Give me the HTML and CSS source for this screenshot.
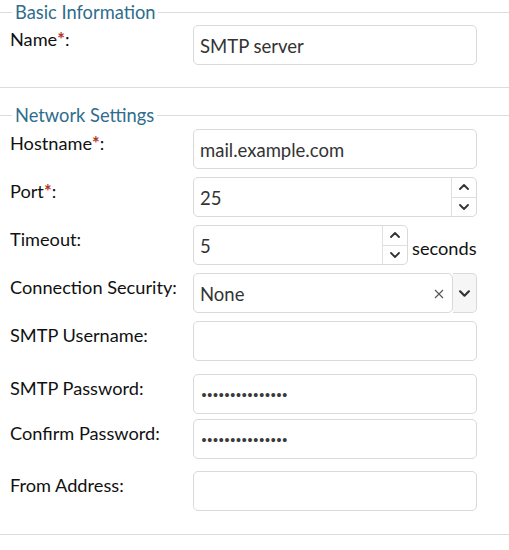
FILE: index.html
```html
<!DOCTYPE html>
<html>
<head>
<meta charset="utf-8">
<link rel="stylesheet" href="styles.css">
</head>
<body>
<form class="form">
  <fieldset class="group group-basic">
    <legend class="group-title">Basic Information</legend>
    <div class="row row-first">
      <label class="label">Name<span class="req">*</span>:</label>
      <div class="control"><div class="input">SMTP server</div></div>
    </div>
  </fieldset>

  <fieldset class="group group-network">
    <legend class="group-title">Network Settings</legend>
    <div class="row row-first">
      <label class="label">Hostname<span class="req">*</span>:</label>
      <div class="control"><div class="input">mail.example.com</div></div>
    </div>
    <div class="row">
      <label class="label">Port<span class="req">*</span>:</label>
      <div class="control">
        <div class="input input-number input-full">
          <span class="value">25</span>
          <span class="spinner">
            <span class="spin"><svg viewBox="0 0 10 6" class="chev"><path d="M1 5 L5 1 L9 5"/></svg></span>
            <span class="spin"><svg viewBox="0 0 10 6" class="chev"><path d="M1 1 L5 5 L9 1"/></svg></span>
          </span>
        </div>
      </div>
    </div>
    <div class="row">
      <label class="label">Timeout:</label>
      <div class="control control-inline">
        <div class="input input-number input-short">
          <span class="value">5</span>
          <span class="spinner">
            <span class="spin"><svg viewBox="0 0 10 6" class="chev"><path d="M1 5 L5 1 L9 5"/></svg></span>
            <span class="spin"><svg viewBox="0 0 10 6" class="chev"><path d="M1 1 L5 5 L9 1"/></svg></span>
          </span>
        </div>
        <span class="unit">seconds</span>
      </div>
    </div>
    <div class="row">
      <label class="label">Connection Security:</label>
      <div class="control control-select">
        <div class="input select-box">
          <span class="value">None</span>
          <svg viewBox="0 0 10 10" class="clear"><path d="M1 1 L9 9 M9 1 L1 9"/></svg>
        </div>
        <div class="select-toggle"><svg viewBox="0 0 10 6" class="chev chev-lg"><path d="M1 1 L5 5 L9 1"/></svg></div>
      </div>
    </div>
    <div class="row">
      <label class="label">SMTP Username:</label>
      <div class="control"><div class="input"></div></div>
    </div>
    <div class="row row-pw">
      <label class="label">SMTP Password:</label>
      <div class="control"><div class="input"><span class="dots">•••••••••••••••</span></div></div>
    </div>
    <div class="row row-confirm">
      <label class="label">Confirm Password:</label>
      <div class="control"><div class="input"><span class="dots">•••••••••••••••</span></div></div>
    </div>
    <div class="row row-from">
      <label class="label">From Address:</label>
      <div class="control"><div class="input"></div></div>
    </div>
  </fieldset>
</form>
</body>
</html>
```

FILE: styles.css
```css
html, body {
  margin: 0;
  padding: 0;
  background: #fff;
}
body {
  font-family: Lato, "Open Sans", sans-serif;
  color: #111;
  width: 509px;
}
.form {
  margin: 0;
}
.group {
  margin: 0;
  padding: 0 10px 0 10px;
  border: none;
  border-top: 1px solid #dcdcdc;
  border-bottom: 1px solid #dcdcdc;
  min-width: 0;
}
.group-basic {
  padding-bottom: 22px;
}
.group-network {
  margin-top: 15px;
  padding-bottom: 23px;
}
.group-title {
  font-size: 18.3px;
  line-height: 24px;
  color: #2e6d8c;
  padding: 0 3px;
  margin-left: 2px;
}
.row {
  display: flex;
  align-items: flex-start;
  margin-top: 8px;
}
.row-first { margin-top: 1px; }
.group-network .row-first { margin-top: 2px; }
.row-pw { margin-top: 13px; }
.row-confirm { margin-top: 5px; }
.row-from { margin-top: 12px; }
.label {
  width: 183px;
  flex: none;
  font-size: 18.2px;
  line-height: 22px;
  padding-top: 3px;
}
.req {
  color: #b5331f;
  font-weight: 700;
}
.control {
  width: 284px;
  display: flex;
  align-items: center;
}
.input {
  box-sizing: border-box;
  width: 284px;
  height: 40px;
  border: 1px solid #d9d9d9;
  border-radius: 5px;
  padding: 0 5px 0 6px;
  display: flex;
  align-items: center;
  font-size: 18.5px;
  color: #333;
  padding-top: 2px;
}
.input-number {
  padding-right: 0;
  position: relative;
}
.input-number .value {
  flex: 1;
}
.input-short {
  width: 215px;
}
.spinner {
  width: 24px;
  height: 38px;
  margin-top: -2px;
  border-left: 1px solid #e0e0e0;
  display: flex;
  flex-direction: column;
}
.spin {
  flex: 1;
  display: flex;
  align-items: center;
  justify-content: center;
}
.spin + .spin {
  border-top: 1px solid #e0e0e0;
}
.chev {
  width: 10px;
  height: 6px;
  fill: none;
  stroke: #333;
  stroke-width: 1.8;
  stroke-linecap: round;
  stroke-linejoin: round;
}
.chev-lg {
  width: 11px;
  height: 7px;
  stroke-width: 2;
}
.unit {
  margin-left: 4px;
  font-size: 18.2px;
  padding-top: 6px;
  color: #111;
}
.control-select {
  gap: 0;
}
.select-box {
  width: 260px;
  padding-right: 8px;
}
.select-box .value {
  flex: 1;
}
.clear {
  width: 10px;
  height: 10px;
  fill: none;
  stroke: #555;
  stroke-width: 1.1;
}
.select-toggle {
  box-sizing: border-box;
  width: 24px;
  height: 40px;
  border: 1px solid #d9d9d9;
  border-left: none;
  border-radius: 0 5px 5px 0;
  background: #f6f6f6;
  display: flex;
  align-items: center;
  justify-content: center;
}
.dots {
  font-size: 13.5px;
  letter-spacing: -2.2px;
  color: #3a3a3a;
  font-family: "DejaVu Sans", sans-serif;
}
```
